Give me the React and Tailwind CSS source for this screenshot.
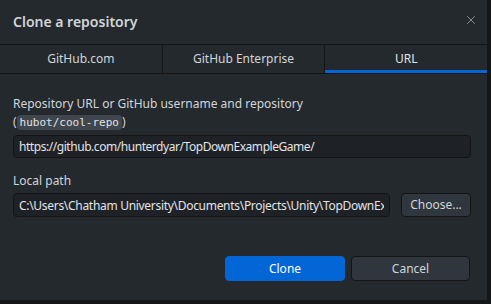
import React from 'react';
import { X } from 'lucide-react';

const tabs = ['GitHub.com', 'GitHub Enterprise', 'URL'];

export default function App() {
  return (
    <div className="w-[491px] h-[304px] bg-[#141618] font-['Segoe_UI','Noto_Sans',sans-serif] text-[12px] text-[#d1d5da]">
      <div className="w-[487px] h-[300px] bg-[#24292e] flex flex-col">
        {/* header */}
        <div className="h-[45px] flex items-center justify-between pl-[13px] pr-[9px] pb-[4px] border-b border-[#141414]">
          <h1 className="text-[14px] font-semibold text-[#d1d5da] pt-[2px]">Clone a repository</h1>
          <X size={14} strokeWidth={1.5} className="text-[#959da5]" />
        </div>

        {/* tabs */}
        <div className="flex h-[29px] border-b border-[#141414]">
          {tabs.map((t, i) => (
            <div
              key={t}
              className={`flex-1 flex items-center justify-center relative ${i > 0 ? 'border-l border-[#141414]' : ''} ${i === 2 ? 'text-[#e1e4e8]' : 'text-[#d1d5da]'}`}
            >
              {t}
              {i === 2 && <span className="absolute left-0 right-0 bottom-0 h-[3px] bg-[#0366d6]" />}
            </div>
          ))}
        </div>

        {/* body */}
        <div className="flex flex-col px-[13px] pt-[21px]">
          <label className="leading-[18px]">Repository URL or GitHub username and repository</label>
          <div className="leading-[18px] flex items-center">
            (<code className="font-['DejaVu_Sans_Mono',monospace] text-[11px] text-[#e1e4e8] bg-[#3f464d] rounded-[4px] px-[3px] leading-[15px]">hubot/cool-repo</code>)
          </div>
          <input
            readOnly
            value="https://github.com/hunterdyar/TopDownExampleGame/"
            className="mt-[4px] h-[23px] w-[458px] rounded-[4px] bg-[#1e2226] border border-[#141414] px-[5px] text-[#e1e4e8] tracking-[-0.45px] outline-none"
          />

          <label className="mt-[14px] leading-[18px]">Local path</label>
          <div className="mt-[3px] flex gap-[11px]">
            <input
              readOnly
              value="C:\Users\Chatham University\Documents\Projects\Unity\TopDownExampleGame"
              className="h-[24px] w-[377px] rounded-[4px] bg-[#1e2226] border border-[#141414] px-[5px] text-[#e1e4e8] tracking-[-0.3px] outline-none"
            />
            <button className="h-[24px] w-[70px] rounded-[4px] bg-[#2f363d] border border-[#141414] text-[#d1d5da]">
              Choose...
            </button>
          </div>
        </div>

        {/* footer */}
        <div className="mt-auto mb-[19px] flex justify-end gap-[6px] pr-[17px]">
          <button className="h-[25px] w-[120px] rounded-[4px] bg-[#0366d6] text-white border border-[#0366d6]">Clone</button>
          <button className="h-[25px] w-[119px] rounded-[4px] bg-[#2f363d] border border-[#141414] text-[#d1d5da]">Cancel</button>
        </div>
      </div>
    </div>
  );
}
